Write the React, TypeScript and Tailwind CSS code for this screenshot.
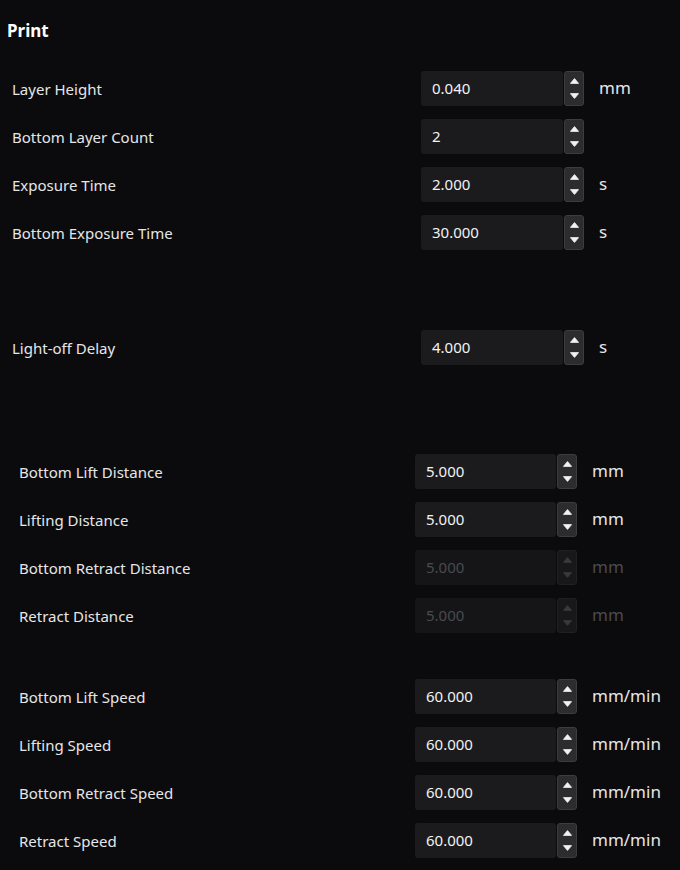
import React from 'react'

type Row = { label: string; value: string; unit?: string; disabled?: boolean }

const groupA: Row[] = [
  { label: 'Layer Height', value: '0.040', unit: 'mm' },
  { label: 'Bottom Layer Count', value: '2' },
  { label: 'Exposure Time', value: '2.000', unit: 's' },
  { label: 'Bottom Exposure Time', value: '30.000', unit: 's' },
]

const distances: Row[] = [
  { label: 'Bottom Lift Distance', value: '5.000', unit: 'mm' },
  { label: 'Lifting Distance', value: '5.000', unit: 'mm' },
  { label: 'Bottom Retract Distance', value: '5.000', unit: 'mm', disabled: true },
  { label: 'Retract Distance', value: '5.000', unit: 'mm', disabled: true },
]

const speeds: Row[] = [
  { label: 'Bottom Lift Speed', value: '60.000', unit: 'mm/min' },
  { label: 'Lifting Speed', value: '60.000', unit: 'mm/min' },
  { label: 'Bottom Retract Speed', value: '60.000', unit: 'mm/min' },
  { label: 'Retract Speed', value: '60.000', unit: 'mm/min' },
]

function Spinner({ disabled }: { disabled?: boolean }) {
  const fill = disabled ? '#3a3a3c' : '#f2f2f2'
  return (
    <div
      className={
        'flex h-full w-[20px] flex-col items-center justify-between rounded-[3px] border py-[6px] ' +
        (disabled ? 'border-[#202022] bg-[#18181a]' : 'border-[#3c3c3e] bg-[#2c2c2e]')
      }
    >
      <svg width="9" height="6" viewBox="0 0 9 6">
        <path d="M4.5 0.6 L8.6 5.4 L0.4 5.4 Z" fill={fill} strokeLinejoin="round" stroke={fill} strokeWidth="0.8" />
      </svg>
      <svg width="9" height="6" viewBox="0 0 9 6">
        <path d="M0.4 0.6 L8.6 0.6 L4.5 5.4 Z" fill={fill} strokeLinejoin="round" stroke={fill} strokeWidth="0.8" />
      </svg>
    </div>
  )
}

function SettingRow({ row, inputW }: { row: Row; inputW: string }) {
  return (
    <div className="flex h-[48px] items-center">
      <span className="flex-1 pt-[2px] text-[15px] text-[#e6e6e6]">{row.label}</span>
      <div className="flex h-[35px] items-stretch gap-px">
        <div
          className={
            'flex items-center rounded-[3px] pl-[11px] text-[15px] ' +
            inputW +
            (row.disabled ? ' bg-[#151517] text-[#4a4a4c]' : ' bg-[#1b1b1d] text-[#f2f2f2]')
          }
        >
          {row.value}
        </div>
        <Spinner disabled={row.disabled} />
      </div>
      <span
        className={
          'w-[81px] pl-[15px] text-[17px] ' + (row.disabled ? 'text-[#4a4a4c]' : 'text-[#e6e6e6]')
        }
      >
        {row.unit ?? ''}
      </span>
    </div>
  )
}

export default function App() {
  return (
    <div
      className="min-h-[870px] w-[680px] bg-[#0b0b0e] pt-[19px]"
      style={{ fontFamily: '"Noto Sans", sans-serif' }}
    >
      <h1 className="pl-[7px] text-[17px] font-bold leading-[24px] text-white">Print</h1>

      {/* Exposure settings */}
      <div className="mt-[21px] pl-[12px] pr-[15px]">
        {groupA.map((r) => (
          <SettingRow key={r.label} row={r} inputW="w-[142px]" />
        ))}
        <div className="mt-[67px]">
          <SettingRow row={{ label: 'Light-off Delay', value: '4.000', unit: 's' }} inputW="w-[142px]" />
        </div>
      </div>

      {/* Motion settings */}
      <div className="mt-[76px] pl-[19px] pr-[22px]">
        {distances.map((r) => (
          <SettingRow key={r.label} row={r} inputW="w-[141px]" />
        ))}
        <div className="mt-[33px]">
          {speeds.map((r) => (
            <SettingRow key={r.label} row={r} inputW="w-[141px]" />
          ))}
        </div>
      </div>
    </div>
  )
}
